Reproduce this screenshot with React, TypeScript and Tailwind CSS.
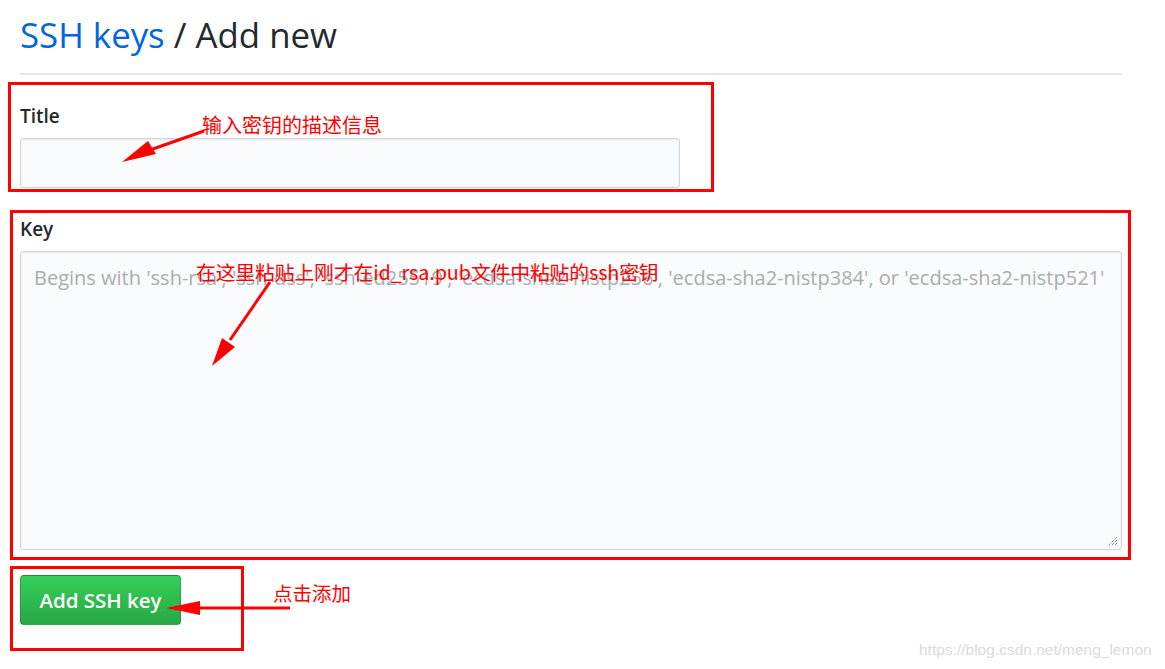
import React from "react";

export default function App() {
  const ui = "font-['Open_Sans','Noto_Sans',sans-serif]";
  const cjk = "font-['Noto_Sans_CJK_SC',sans-serif]";
  return (
    <div className={`relative w-[1165px] h-[669px] bg-white overflow-hidden ${ui}`}>
      <div className="flex flex-col">
        <h1 className="ml-[20px] mt-[11px] h-[48px] text-[34.8px] leading-[48px] text-[#24292e]">
          <span className="text-[#0366d6]">SSH keys</span> / Add new
        </h1>
        <div className="ml-[20px] mt-[14px] w-[1102px] h-[2px] bg-[#e1e4e8]" />
        <div className="ml-[8px] mt-[7px] w-[706px] h-[110px] border-[3px] border-[#ff0000] pl-[9px] pt-[17px]">
          <label className="block text-[19px] leading-[28px] font-semibold text-[#24292e]">Title</label>
          <div className="mt-[8px] w-[660px] h-[50px] rounded-[3px] border border-[#d1d5da] bg-[#fafbfc] shadow-[inset_0_1px_2px_rgba(27,31,35,0.075)]" />
        </div>
        <div className="ml-[10px] mt-[18px] w-[1121px] h-[350px] border-[3px] border-[#ff0000] pl-[7px] pt-[2px]">
          <label className="block text-[19px] leading-[28px] font-semibold text-[#24292e]">Key</label>
          <div className="relative mt-[8px] w-[1102px] h-[299px] rounded-[3px] border border-[#d1d5da] bg-[#fafbfc] shadow-[inset_0_1px_2px_rgba(27,31,35,0.075)] pl-[13px] pt-[12px]">
            <div className="text-[20px] leading-[28px] text-[#a8adb3] whitespace-nowrap">
              Begins with 'ssh-rsa', 'ssh-dss', 'ssh-ed25519', 'ecdsa-sha2-nistp256', 'ecdsa-sha2-nistp384', or 'ecdsa-sha2-nistp521'
            </div>
            <svg className="absolute right-[3px] bottom-[3px]" width="10" height="10" viewBox="0 0 10 10">
              <path d="M9 1 L1 9 M9 4 L4 9 M9 7 L7 9" stroke="#555" strokeWidth="1" strokeDasharray="1 1" />
            </svg>
          </div>
        </div>
        <div className="ml-[10px] mt-[6px] w-[234px] h-[85px] border-[3px] border-[#ff0000] pl-[7px] pt-[6px]">
          <button className="w-[161px] h-[50px] rounded-[4px] border border-[rgba(27,31,35,0.2)] bg-gradient-to-b from-[#34d058] to-[#28a745] text-white text-[20.5px] font-semibold leading-[48px]">
            Add SSH key
          </button>
        </div>
      </div>

      {/* annotations */}
      <div className={`absolute left-[202px] top-[113px] text-[20px] leading-[24px] text-[#ff0000] ${cjk}`}>输入密钥的描述信息</div>
      <div className={`absolute left-[196px] top-[259px] text-[19.8px] leading-[26px] text-[#ff0000] whitespace-nowrap tracking-[-0.1px] ${cjk}`}>在这里粘贴上刚才在id_rsa.pub文件中粘贴的ssh密钥</div>
      <div className={`absolute left-[273px] top-[581px] text-[19.5px] leading-[24px] text-[#ff0000] ${cjk}`}>点击添加</div>
      <svg className="absolute left-0 top-0 pointer-events-none" width="1165" height="669">
        <line x1="204" y1="131" x2="150" y2="150" stroke="#ff0000" strokeWidth="3" />
        <polygon points="122,162 148,141 156,154" fill="#ff0000" />
        <line x1="270" y1="282" x2="230" y2="340" stroke="#ff0000" strokeWidth="3" />
        <polygon points="212,366 222,338 235,347" fill="#ff0000" />
        <line x1="290" y1="608" x2="198" y2="608" stroke="#ff0000" strokeWidth="3" />
        <polygon points="166,608 200,601 200,615" fill="#ff0000" />
      </svg>
      <div className="absolute left-[919px] top-[640px] font-['Liberation_Sans',Arial,sans-serif] text-[15.5px] leading-[20px] text-[#dadada]">
        https://blog.csdn.net/meng_lemon
      </div>
    </div>
  );
}
